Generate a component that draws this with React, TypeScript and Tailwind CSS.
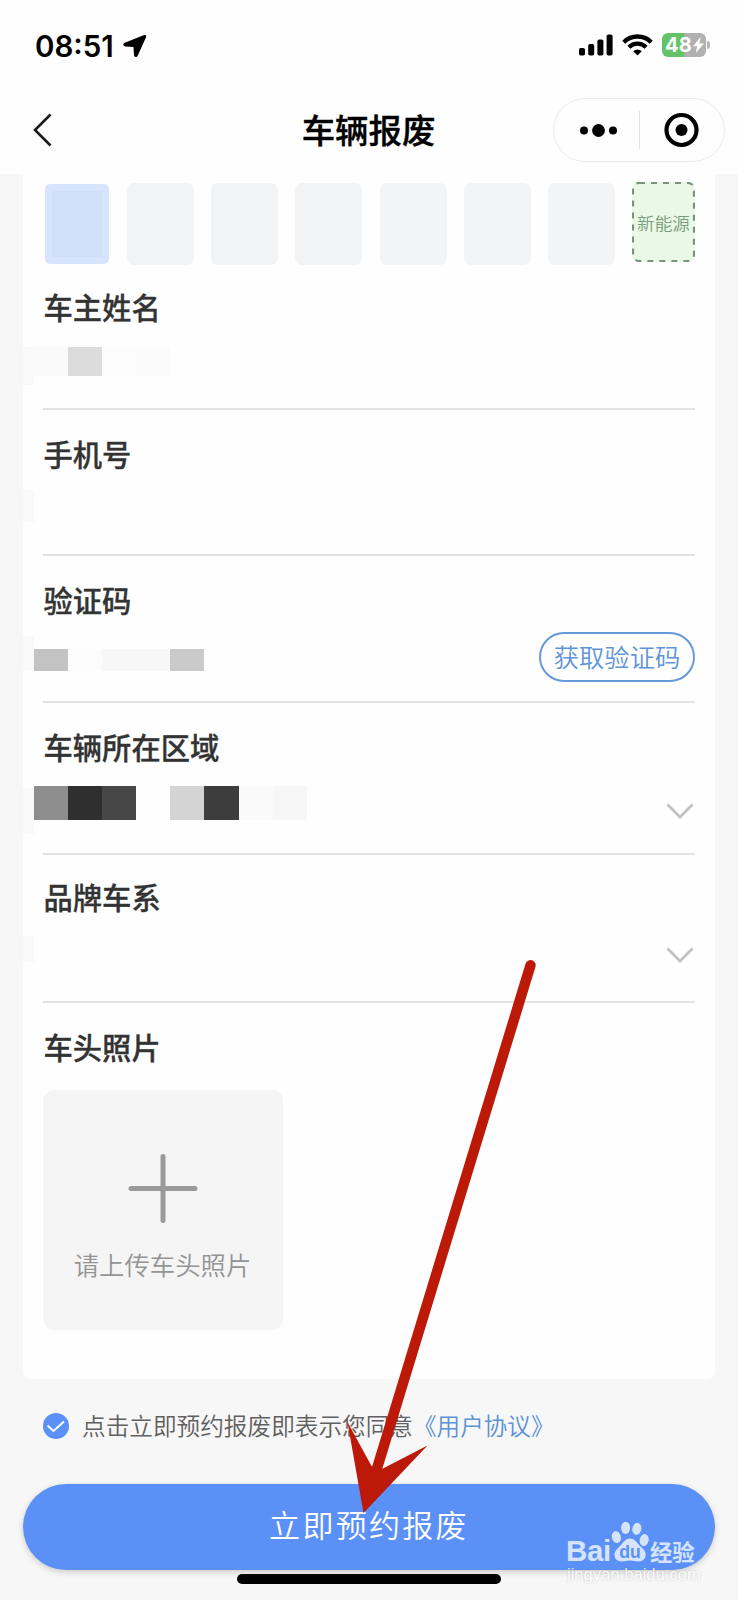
import type { ReactNode } from "react";

const plates = [1, 2, 3, 4, 5, 6];

function StatusBar() {
  return (
    <div className="flex h-[90px] items-start justify-between pl-[35px] pr-[28px]">
      <div className="mt-[28px] flex h-[36px] items-center">
        <span className="w-[79px] whitespace-nowrap font-['Inter'] text-[29.5px] font-semibold leading-[36px] text-black">
          08:51
        </span>
        <svg className="ml-[9px]" width="24" height="24" viewBox="0 0 24 24">
          <path
            d="M21.500 1.800 2 9.600c-1.200.600-1 1.700.200 1.900l8.300.500c.600 0 .900.300.900.900l.500 8.200c.200 1.300 1.500 1.400 2 .200L22.300 2.600c.200-.600-.200-1-.800-.800Z"
            fill="#000"
            stroke="#000"
            strokeWidth="1.800"
            strokeLinejoin="round"
          />
        </svg>
      </div>
      <div className="mt-[32px] flex h-[26px] items-center">
        <svg width="34" height="22" viewBox="0 0 34 22">
          <rect x="0" y="14" width="6" height="7.500" rx="1.800" />
          <rect x="9.200" y="10" width="6" height="11.500" rx="1.800" />
          <rect x="18.400" y="5.500" width="6" height="16" rx="1.800" />
          <rect x="27.600" y="0.500" width="6" height="21" rx="1.800" />
        </svg>
        <svg className="ml-[9px]" width="31" height="22" viewBox="0 0 31 22" fill="none" stroke="#000">
          <path d="M1.800 8.200a19.300 19.300 0 0 1 27.400 0" strokeWidth="4.400" />
          <path d="M6.900 13.300a12 12 0 0 1 17.200 0" strokeWidth="4.200" />
          <path d="M15.500 21.600 11.200 17.300a6.200 6.200 0 0 1 8.600 0Z" fill="#000" stroke="none" />
        </svg>
        <div className="ml-[9px] flex items-center">
          <div className="flex h-[24px] w-[44px] items-center rounded-[6px] bg-[linear-gradient(90deg,#62c466_49%,#b0b0b0_49%)] pl-[3px]">
            <span className="font-['Inter'] text-[20px] font-bold leading-[24px] tracking-[0.2px] text-white">48</span>
            <svg width="13" height="18" viewBox="0 0 13 18">
              <path d="M8.600 1 1 10.200h4.200L3.800 17 12 7.600H7.400Z" fill="#fff" />
            </svg>
          </div>
          <div className="ml-[1px] h-[8px] w-[3px] rounded-r-full bg-[#b5b5b5]" />
        </div>
      </div>
    </div>
  );
}

function NavBar() {
  return (
    <div className="grid h-[84px] grid-cols-[1fr_auto_1fr] items-start pl-[33px] pr-[13px]">
      <svg className="mt-[23px]" width="20" height="34" viewBox="0 0 20 34" fill="none">
        <path d="M17.500 1.500 2 17l15.500 15.500" stroke="#1a1a1a" strokeWidth="2.600" />
      </svg>
      <h1 className="-ml-[21px] mt-[18px] text-[33.400px] font-medium leading-[42px] text-black [-webkit-text-stroke:0.4px_#000]">
        车辆报废
      </h1>
      <div className="mt-[8px] flex h-[64px] w-[172px] items-center justify-self-end rounded-full border border-[#ebebeb]">
        <svg width="85" height="20" viewBox="0 0 85 20">
          <circle cx="30" cy="10.500" r="4" />
          <circle cx="44.500" cy="10.500" r="6.400" />
          <circle cx="59" cy="10.500" r="4" />
        </svg>
        <div className="h-[38px] w-px bg-[#e3e3e3]" />
        <svg className="ml-[24px]" width="36" height="36" viewBox="0 0 36 36">
          <circle cx="17.500" cy="18" r="15" fill="none" stroke="#000" strokeWidth="4.200" />
          <circle cx="17.500" cy="18" r="6" />
        </svg>
      </div>
    </div>
  );
}

function Plates() {
  return (
    <div className="flex h-[91px] items-start pl-[2px] pt-[9px]">
      <div className="mt-px h-[80px] w-[64px] rounded-[5px] border-[7px] border-[#d6e5fb] bg-[#d0e0f9]" />
      <div className="ml-[18px] flex gap-[17.200px]">
        {plates.map((p) => (
          <div key={p} className="h-[82px] w-[67px] rounded-[7px] bg-[#f2f4f6]" />
        ))}
      </div>
      <div className="relative -mt-px ml-[17px] flex h-[80px] w-[63px] items-center justify-center rounded-[7px] bg-[#e9f9e5]">
        <svg className="absolute inset-0" width="63" height="80" viewBox="0 0 63 80" fill="none">
          <rect x="1" y="1" width="61" height="78" rx="6" stroke="#789579" strokeWidth="2.200" strokeDasharray="6 6" />
        </svg>
        <span className="mt-[2px] whitespace-nowrap text-[17.600px] font-[350] leading-[20px] text-[#7a9d80]">新能源</span>
      </div>
    </div>
  );
}

function Field({ label, className, children }: { label: string; className: string; children?: ReactNode }) {
  return (
    <div className={`border-b-2 border-[#e2e2e2] ${className}`}>
      <div className="whitespace-nowrap pl-[0.5px] text-[29.300px] font-medium leading-[30px] text-[#333] [-webkit-text-stroke:0.3px_#333]">
        {label}
      </div>
      {children}
    </div>
  );
}

function Chevron({ className }: { className: string }) {
  return (
    <svg className={className} width="28" height="17" viewBox="0 0 28 17" fill="none">
      <path d="M1.500 1.500 14 14 26.500 1.500" stroke="#c2c2c2" strokeWidth="2.700" />
    </svg>
  );
}

function PawMark() {
  return (
    <svg className="ml-[2px]" width="39" height="42" viewBox="0 0 40 42">
      <g fill="#fff">
        <ellipse cx="5.500" cy="16" rx="4.600" ry="6.200" transform="rotate(-12 5.500 16)" />
        <ellipse cx="15" cy="6.500" rx="4.600" ry="6.200" />
        <ellipse cx="26.500" cy="7.500" rx="4.600" ry="6.200" transform="rotate(12 26.500 7.500)" />
        <ellipse cx="34" cy="19" rx="4.600" ry="6.200" transform="rotate(12 34 19)" />
        <path d="M19.500 17.500c4.500 0 6.500 3.600 9.500 6.800 3.600 3.600 7 6 6.600 10.400-.500 4.300-3.700 6.300-7.300 6.300-3.300 0-5.300-1-8.800-1s-5.500 1-8.800 1C7 41 4 38.800 3.600 34.700c-.400-4.400 3-6.800 6.400-10.400 3-3.200 5-6.800 9.500-6.800Z" />
      </g>
      <text
        x="19.500"
        y="37"
        textAnchor="middle"
        fontFamily="Liberation Sans, sans-serif"
        fontWeight="700"
        fontSize="18"
        fill="#5b91f6"
      >
        du
      </text>
    </svg>
  );
}

export default function App() {
  return (
    <div className="relative h-[1600px] w-[738px] overflow-hidden bg-[#f7f7f7] font-['Noto_Sans_CJK_SC',sans-serif]">
      <header className="h-[174px] bg-[#fefefe]">
        <StatusBar />
        <NavBar />
      </header>

      <main className="ml-[23px] h-[1205px] w-[692px] rounded-b-[8px] bg-[#fefefe] px-[20px]">
        <Plates />

        <Field label="车主姓名" className="h-[145px] pt-[26px]">
          <div className="-ml-[20px] mt-[26px] flex h-[38px] items-start">
            <div className="h-[38px] w-[11px] bg-[#f9f9f9]" />
            <div className="h-[29px] w-[34px] bg-[#fafafa]" />
            <div className="h-[29px] w-[34px] bg-[#dcdcdc]" />
            <div className="h-[29px] w-[34px] bg-[#fdfdfd]" />
            <div className="h-[29px] w-[34px] bg-[#fbfbfb]" />
          </div>
        </Field>

        <Field label="手机号" className="h-[146px] pt-[28px]">
          <div className="-ml-[20px] mt-[22px] h-[32px] w-[11px] bg-[#f9f9f9]" />
        </Field>

        <Field label="验证码" className="h-[147px] pt-[28px]">
          <div className="-ml-[20px] mt-[18px] flex items-start">
            <div className="mt-[4px] h-[34px] w-[11px] bg-[#f9f9f9]" />
            <div className="mt-[17px] flex h-[22px]">
              <div className="w-[34px] bg-[#c3c3c3]" />
              <div className="w-[34px] bg-[#fcfcfc]" />
              <div className="w-[68px] bg-[#f7f7f7]" />
              <div className="w-[34px] bg-[#cacaca]" />
            </div>
            <button className="ml-auto flex h-[50px] w-[156px] items-center justify-center rounded-full border-2 border-[#6798d8] pb-[3px] text-[25.300px] font-[350] leading-[30px] text-[#6094d8]">
              <span className="whitespace-nowrap">获取验证码</span>
            </button>
          </div>
        </Field>

        <Field label="车辆所在区域" className="h-[152px] pt-[28px]">
          <div className="-ml-[20px] mt-[25px] flex items-start pr-px">
            <div className="mt-[2px] h-[46px] w-[11px] bg-[#f9f9f9]" />
            <div className="flex h-[34px]">
              <div className="w-[34px] bg-[#8d8d8d]" />
              <div className="w-[34px] bg-[#2f2f2f]" />
              <div className="mr-[34px] w-[34px] bg-[#474747]" />
              <div className="w-[34px] bg-[#d4d4d4]" />
              <div className="w-[35px] bg-[#3d3d3d]" />
              <div className="w-[34px] bg-[#fafafa]" />
              <div className="w-[34px] bg-[#f7f7f7]" />
            </div>
            <Chevron className="ml-auto mt-[17px]" />
          </div>
        </Field>

        <Field label="品牌车系" className="h-[148px] pt-[26px]">
          <div className="-ml-[20px] mt-[25px] flex items-start justify-between pr-px">
            <div className="h-[26px] w-[11px] bg-[#f9f9f9]" />
            <Chevron className="mt-[11px]" />
          </div>
        </Field>

        <section className="pt-[28px]">
          <div className="pl-[0.5px] text-[29.300px] font-medium leading-[30px] text-[#333] [-webkit-text-stroke:0.3px_#333]">
            车头照片
          </div>
          <div className="mt-[29px] flex h-[240px] w-[240px] flex-col items-center rounded-[11px] bg-[#f5f5f5] pt-[63px]">
            <svg width="70" height="70" viewBox="0 0 70 70">
              <path d="M35 3.500v64M3 35.500h64" stroke="#9a9a9a" strokeWidth="5" strokeLinecap="round" />
            </svg>
            <span className="-ml-px mt-[26px] whitespace-nowrap text-[25.400px] font-[350] leading-[30px] text-[#949494]">
              请上传车头照片
            </span>
          </div>
        </section>
      </main>

      <div className="mt-[30px] flex h-[34px] items-center pl-[43px]">
        <svg width="26" height="26" viewBox="0 0 26 26" fill="none">
          <circle cx="13" cy="13" r="13" fill="#5b91f6" />
          <path d="m4.500 12.500 6 5.500L21 8.500" stroke="#fff" strokeWidth="2" />
        </svg>
        <span className="-mt-[2px] ml-[13px] whitespace-nowrap text-[23.650px] font-[350] leading-[34px] text-[#606060]">
          点击立即预约报废即表示您同意
        </span>
        <span className="-mt-[2px] whitespace-nowrap text-[23.600px] font-[350] leading-[34px] text-[#5a92d4]">
          《用户协议》
        </span>
      </div>

      <button className="ml-[23px] mt-[41px] flex h-[86px] w-[692px] items-center justify-center rounded-full bg-[#5b91f6] pb-[6px] text-[31px] font-[350] leading-[40px] tracking-[2.300px] text-white shadow-[0_2px_6px_rgba(0,0,0,0.18)]">
        立即预约报废
      </button>
      <div className="ml-[237px] mt-[4px] h-[10px] w-[264px] rounded-full bg-black" />

      <div className="absolute left-[566px] top-[1520px] text-white">
        <div className="flex h-[43px] items-end opacity-75">
          <span className="mb-[-3px] w-[43px] whitespace-nowrap font-['Liberation_Sans'] text-[29.500px] font-bold leading-[30px] tracking-[-0.3px]">
            Bai
          </span>
          <PawMark />
          <span className="mb-[-1px] whitespace-nowrap text-[22.300px] font-bold leading-[26px]">经验</span>
        </div>
        <div className="mt-[4px] whitespace-nowrap pl-px font-['Liberation_Sans'] text-[16.600px] leading-[16px] opacity-80 [text-shadow:0_0_2px_rgba(0,0,0,0.25)]">
          jingyan.baidu.com
        </div>
      </div>

      <svg className="pointer-events-none absolute left-[340px] top-[950px]" width="210" height="570" viewBox="340 950 210 570">
        <path d="M530.500 965.300 376.500 1470" stroke="#bc1908" strokeWidth="10.400" strokeLinecap="round" />
        <path d="M347.500 1422 371.500 1466 382 1469 427.500 1445.500 363.500 1513Z" fill="#bc1908" />
      </svg>
    </div>
  );
}
